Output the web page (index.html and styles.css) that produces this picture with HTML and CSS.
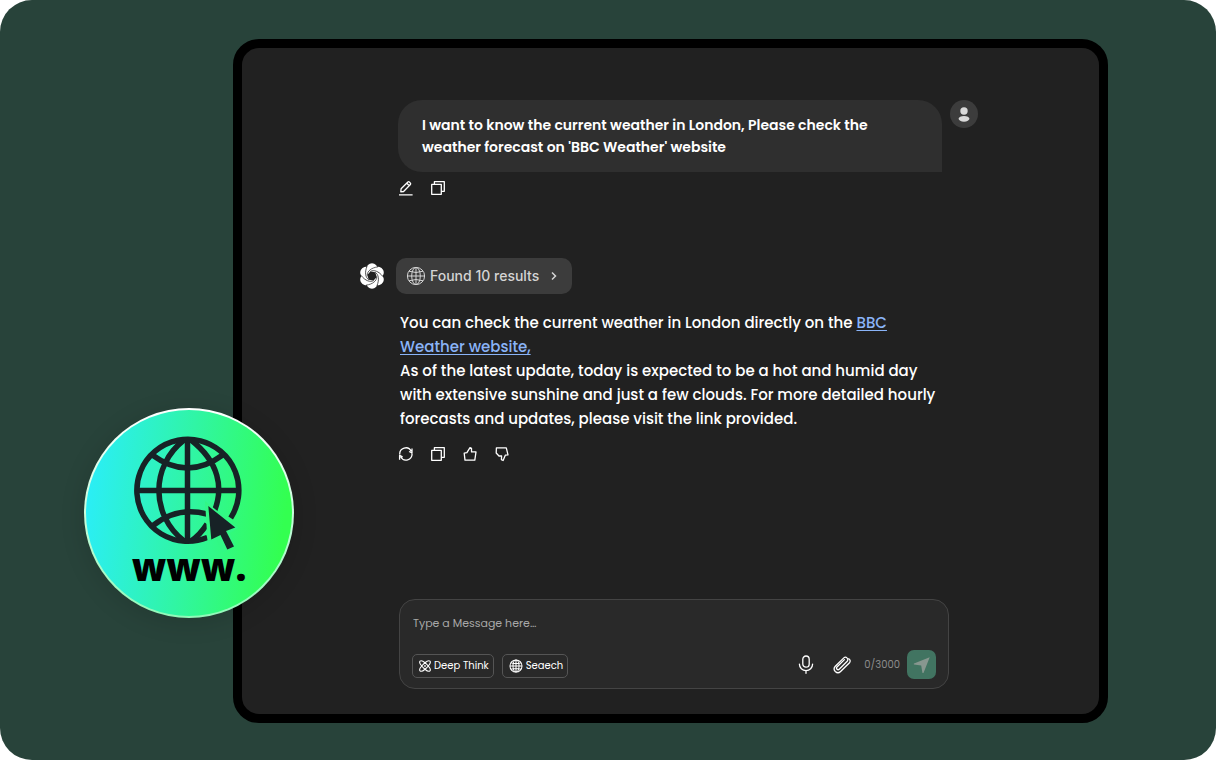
FILE: index.html
```
<!DOCTYPE html>
<html lang="en">
<head>
<meta charset="utf-8">
<meta name="viewport" content="width=device-width, initial-scale=1">
<title>Web search chat</title>
<link rel="stylesheet" href="styles.css">
</head>
<body>
<svg class="sprite" aria-hidden="true">
  <symbol id="copy" viewBox="0 0 16 16"><path d="M1.700 4.400h9.600v9.900H1.700zM4.400 4.200V1.700h9.900v9.600h-2.800"/></symbol>
  <symbol id="globe" viewBox="0 0 20 20"><circle cx="10" cy="10" r="8.600"/><ellipse cx="10" cy="10" rx="4.300" ry="8.600"/><path d="M10 1.400v17.200M1.400 10h17.200M3 5.200Q10 7.800 17 5.200M3 14.800Q10 12.200 17 14.800"/></symbol>
</svg>
<div class="stage">
  <main class="device">
    <section class="turn turn-user">
      <div class="turn-main">
        <p class="bubble">I want to know the current weather in London, Please check the<br>weather forecast on 'BBC Weather' website</p>
        <div class="actions">
          <button class="icon-button" aria-label="Edit"><svg viewBox="0 0 16 16"><path d="M1 14.800h13.600M2.800 11.800l.3-3 6.800-6.800q.7-.6 1.400 0l1.100 1.100q.6.700 0 1.400l-6.800 7zM8.800 3.200l2.600 2.500"/></svg></button>
          <button class="icon-button" aria-label="Copy message"><svg><use href="#copy"/></svg></button>
        </div>
      </div>
      <div class="avatar"><svg viewBox="0 0 28 28"><circle cx="14" cy="11" r="3.700"/><ellipse cx="14" cy="18.800" rx="5.400" ry="2.900"/></svg></div>
    </section>

    <section class="turn turn-bot">
      <svg class="logo" viewBox="-12 -13 24 26" aria-hidden="true">
        <defs>
          <circle id="lobe" cy="-7" r="5.700"/>
          <path id="swirl" d="M-4.800-.9C-4.600-4.800-1-8.200 6-9.200"/>
        </defs>
        <g class="lobes"><use href="#lobe"/><use href="#lobe" transform="rotate(60)"/><use href="#lobe" transform="rotate(120)"/><use href="#lobe" transform="rotate(180)"/><use href="#lobe" transform="rotate(240)"/><use href="#lobe" transform="rotate(300)"/></g>
        <path class="logo-core" d="M-4.800-.9L-1.600-4.600 3.200-3.700 4.800.9 1.600 4.600-3.200 3.700z"/>
        <g class="swirls"><use href="#swirl"/><use href="#swirl" transform="rotate(60)"/><use href="#swirl" transform="rotate(120)"/><use href="#swirl" transform="rotate(180)"/><use href="#swirl" transform="rotate(240)"/><use href="#swirl" transform="rotate(300)"/></g>
      </svg>
      <div class="turn-main">
        <button class="results"><svg class="results-globe"><use href="#globe"/></svg>Found 10 results<svg class="chevron" viewBox="0 0 8 10"><path d="M2 1.500l3.500 3.500L2 8.500"/></svg></button>
        <div class="answer">
          <p>You can check the current weather in London directly on the <a href="#">BBC<br>Weather website,</a></p>
          <p>As of the latest update, today is expected to be a hot and humid day<br>with extensive sunshine and just a few clouds. For more detailed hourly<br>forecasts and updates, please visit the link provided.</p>
        </div>
        <div class="actions">
          <button class="icon-button" aria-label="Regenerate"><svg viewBox="0 0 16 16"><path d="M1.800 8.500A6 6 0 0 1 13.200 5.300M14 7.500A6 6 0 0 1 2.700 10.800M14 2.600v4.200l-3-1.300M1.600 13.800V9.400l3 1.400"/></svg></button>
          <button class="icon-button" aria-label="Copy answer"><svg><use href="#copy"/></svg></button>
          <button class="icon-button" aria-label="Good answer"><svg viewBox="0 0 16 16"><path d="M2.200 7.200l2.700-.5L8 1.600l1.500.8v3.500h4.500l-1.200 8.200H3z"/></svg></button>
          <button class="icon-button" aria-label="Bad answer"><svg viewBox="0 0 16 16"><path d="M2.400 1.900h9.900l1.700 6.900-2.700.4-2.200 5.300-1.700-.9.200-3.600H5L2.200 7z"/></svg></button>
        </div>
      </div>
    </section>

    <form class="composer">
      <input class="message" type="text" aria-label="Message" placeholder="Type a Message here…">
      <div class="toolbar">
        <button class="tool" type="button"><svg viewBox="0 0 14 14"><path d="M7 3.200C9.500 1 12 .6 12.800 1.400S13 4.500 10.800 7c2.200 2.500 2.800 4.800 2 5.600S9.500 13 7 10.800C4.500 13 2 13.400 1.200 12.600S1 9.500 3.200 7C1 4.500.4 2.200 1.200 1.400S4.500 1 7 3.200zM7 3.200Q9.300 5 10.800 7 9.300 9 7 10.800 4.700 9 3.200 7 4.700 5 7 3.200z"/><circle cx="7" cy="7" r=".4"/></svg>Deep Think</button>
        <button class="tool" type="button"><svg class="tool-globe"><use href="#globe"/></svg>Seaech</button>
        <div class="send-group">
          <button class="plain" type="button" aria-label="Voice input"><svg viewBox="0 0 20 20"><rect x="6.800" y="1" width="6.400" height="11.200" rx="3.200"/><path d="M3.400 9.100a6.600 6.600 0 0 0 13.200 0M10 15.700v2.600"/></svg></button>
          <button class="plain" type="button" aria-label="Attach file"><svg viewBox="0 0 20 20"><path d="M12.400 4.600L5 12a1.500 1.500 0 0 0 2.200 2.200l8-8a2.300 2.300 0 0 0-.2-3.300 2.300 2.300 0 0 0-3.200 0L3.300 11.300a3.800 3.800 0 0 0 0 5.200 3.800 3.800 0 0 0 5.300 0l8.900-8.800a2.600 2.600 0 0 0-.7-4"/></svg></button>
          <span class="count">0/3000</span>
          <button class="send" aria-label="Send"><svg viewBox="0 0 18 18"><path d="M16.700 1.200L1 7.500q-.6.500 0 .9l7.200 1.200 1.200 7.200q.6.600 1.200 0z"/></svg></button>
        </div>
      </div>
    </form>
  </main>

  <div class="badge">
    <svg class="www-globe" viewBox="1 0 110 116">
      <g class="www-lines">
        <path d="M97.700 82A51 51 0 1 0 74.300 101.500M54.500 3.500v102M3.500 54.500h102"/>
        <path d="M51 4C17.500 30 17.500 79 51 105M58 4C86 26 91 52 81 76M58 105Q67 99 74 88M19.300 19Q54.500 45 89.700 19M19.300 90Q44 70 74 78"/>
      </g>
      <path class="www-pointer-gap" d="M72 65l2.500 40 9-2 6 13 13-6-6-13 9-5z"/>
      <path class="www-pointer" d="M75.300 70L102.300 91.500 93 95 101 110.500 94.300 113.500 87.500 99 78.300 103.500z"/>
    </svg>
    <span class="www-text">www.</span>
  </div>
</div>
</body>
</html>
```
FILE: styles.css
```
* { box-sizing: border-box; }
body { margin: 0; background: #fff; font-family: Poppins, Inter, "Noto Sans", sans-serif; color: #fff; }
p { margin: 0; }
button { font: inherit; color: inherit; border: 0; padding: 0; background: none; cursor: pointer; }
svg { display: block; fill: none; stroke: currentColor; }
.sprite { position: absolute; width: 0; height: 0; }

.stage { position: relative; display: flex; min-height: 100vh; padding: 39px 108px 37px 233px; background: #28433a; border-radius: 32px; }
.device { flex: 1; display: flex; flex-direction: column; padding: 52px 121px 25px 118px; background: #212121; border: 9px solid #000; border-radius: 26px; }

.turn { display: flex; }
.turn-user { gap: 8px; padding-left: 38px; }
.turn-bot { gap: 12px; margin: 62px 36px 24px 0; }
.turn-main { flex: 1; }
.bubble { padding: 14px 24px; font-size: 14px; line-height: 22px; font-weight: 600; background: #2f2f2f; border-radius: 24px 24px 0 24px; white-space: nowrap; }
.avatar { width: 28px; height: 28px; border-radius: 50%; background: #3c3c3c; color: #d9d9d9; }
.avatar svg { fill: currentColor; stroke: none; }
.actions { display: flex; gap: 16px; margin-top: 8px; }
.icon-button svg { width: 16px; height: 16px; stroke-width: 1.3; stroke-linejoin: round; }

.logo { width: 24px; height: 26px; margin-top: 5px; }
.lobes { fill: #fff; stroke: none; }
.logo-core { fill: #212121; stroke: none; }
.swirls { stroke: #212121; stroke-width: .7; }
.results { display: flex; align-items: center; gap: 4px; height: 36px; padding: 0 14px 2px 10px; font-family: Inter, sans-serif; font-size: 14px; font-weight: 500; color: #d4d4d4; background: #3c3c3c; border-radius: 10px; }
.results-globe { width: 20px; height: 20px; margin-top: 2px; stroke-width: 1; }
.chevron { width: 8px; height: 10px; margin: 2px 0 0 7px; stroke-width: 1.5; }
.answer { margin-top: 17px; padding-left: 4px; font-size: 15px; line-height: 24px; font-weight: 500; white-space: nowrap; }
.answer a { color: #8ab4f8; text-decoration: underline; text-underline-offset: 2px; }
.turn-bot .actions { margin-top: 15px; padding-left: 2px; }

.composer { margin: auto 29px 0 39px; padding: 13px 12px 9px; background: #292929; border: 1px solid #444; border-radius: 16px; }
.message { display: block; width: 100%; height: 20px; padding: 0 1px; border: 0; outline: 0; background: none; color: #fff; font: inherit; font-size: 11px; }
.message::placeholder { color: #a8a8a8; opacity: 1; }
.toolbar { display: flex; align-items: center; gap: 8px; margin-top: 17px; }
.tool { display: flex; align-items: center; gap: 3px; height: 24px; margin-top: 2px; padding: 0 4px 0 6px; border: 1px solid #555; border-radius: 5px; font-size: 10px; white-space: nowrap; }
.tool svg { width: 12px; height: 12px; stroke-width: 1.3; overflow: visible; }
.tool .tool-globe { width: 14px; height: 14px; stroke-width: 1.5; }
.send-group { display: flex; align-items: center; margin-left: auto; }
.plain { margin-right: 16px; }
.plain svg { width: 20px; height: 20px; stroke-width: 1.3; stroke-linecap: round; }
.count { margin: 0 7px 0 -4px; font-size: 10px; color: #8c8c8c; }
.send { display: grid; place-items: center; width: 29px; height: 29px; border-radius: 7px; background: #417461; color: #87978f; }
.send svg { width: 18px; height: 18px; fill: currentColor; stroke: none; }

.badge { position: absolute; left: 84px; bottom: 142px; display: flex; flex-direction: column; align-items: center; width: 210px; height: 210px; padding-top: 26px; border: 2px solid transparent; border-radius: 50%; background: linear-gradient(97deg, #2aedff, #30f5a5 48%, #33ff50 92%) padding-box, linear-gradient(#fff, #8ff9b8) border-box; box-shadow: 0 4px 24px rgba(0, 0, 0, .15); }
.www-globe { width: 110px; height: 116px; }
.www-lines { stroke: #172226; stroke-width: 5.5; }
.www-pointer-gap { fill: #32f786; stroke: none; }
.www-pointer { fill: #172226; stroke: none; }
.www-text { margin-top: -6px; font-family: "Open Sans", sans-serif; font-size: 38px; line-height: 40px; font-weight: 800; color: #000; }
```
